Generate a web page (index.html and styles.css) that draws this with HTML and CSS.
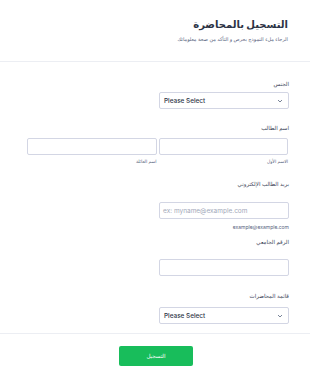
FILE: index.html
```html
<!DOCTYPE html>
<html lang="ar" dir="rtl">
<head>
  <meta charset="UTF-8" />
  <meta name="viewport" content="width=device-width, initial-scale=1.0" />
  <title>التسجيل بالمحاضرة</title>
  <link rel="stylesheet" href="styles.css">
</head>

<body>
  <div class="form-header">
    <h1>التسجيل بالمحاضرة</h1>
    <p>الرجاء ملء النموذج بحرص و التأكد من صحة معلوماتك</p>
  </div>

  <form class="form-body">
    <div class="field field-gender">
      <label>الجنس</label>
      <div class="select-box">
        <span>Please Select</span>
        <svg width="6" height="4" viewBox="0 0 6 4"><path d="M1 1l2 2 2-2" fill="none" stroke="#57647e" stroke-width="0.8"/></svg>
      </div>
    </div>

    <div class="field field-name">
      <label>اسم الطالب</label>
      <div class="name-row">
        <div class="name-col">
          <div class="text-box"></div>
          <span class="sub">الاسم الأول</span>
        </div>
        <div class="name-col">
          <div class="text-box"></div>
          <span class="sub">اسم العائلة</span>
        </div>
      </div>
    </div>

    <div class="field field-email">
      <label>بريد الطالب الإلكتروني</label>
      <div class="text-box half placeholder">ex: myname@example.com</div>
      <span class="sub">example@example.com</span>
    </div>

    <div class="field field-number">
      <label>الرقم الجامعي</label>
      <div class="text-box half"></div>
    </div>

    <div class="field field-lectures">
      <label>قائمة المحاضرات</label>
      <div class="select-box">
        <span>Please Select</span>
        <svg width="6" height="4" viewBox="0 0 6 4"><path d="M1 1l2 2 2-2" fill="none" stroke="#57647e" stroke-width="0.8"/></svg>
      </div>
    </div>
  </form>

  <div class="form-footer">
    <button class="submit-btn" type="button">التسجيل</button>
  </div>
</body>
</html>
```

FILE: styles.css
```css
* {
  box-sizing: border-box;
}

body {
  margin: 0;
  width: 310px;
  height: 380px;
  background: #fff;
  font-family: Inter, "Noto Sans", "DejaVu Sans", sans-serif;
  color: #2c3345;
  overflow: hidden;
}

.form-header {
  padding: 16px 22px 0 0;
  height: 62px;
  border-bottom: 1px solid #eceef3;
}

.form-header h1 {
  margin: 0;
  font-size: 10px;
  line-height: 17px;
  font-weight: 700;
  color: #2c3345;
}

.form-header p {
  margin: 2px 0 0;
  font-size: 5px;
  line-height: 8px;
  color: #57647e;
}

.form-body {
  padding: 0 21px 0 27px;
  display: flex;
  flex-direction: column;
  align-items: flex-start;
}

.field {
  display: flex;
  flex-direction: column;
  align-items: flex-start;
  width: 100%;
}

.field label {
  display: block;
  font-size: 5.5px;
  line-height: 10px;
  color: #3d4559;
}

.field-gender { margin-top: 17px; }
.field-gender label { margin-bottom: 3px; }

.field-name { margin-top: 14px; }
.field-name label { margin-bottom: 5px; }

.field-email { margin-top: 13px; }
.field-email label { margin-bottom: 13px; }

.field-number { margin-top: 6px; }
.field-number label { margin-bottom: 12px; }

.field-lectures { margin-top: 15px; }
.field-lectures label { margin-bottom: 6px; }

.select-box {
  width: 130px;
  height: 17px;
  border: 1px solid #d3d6e4;
  border-radius: 2px;
  display: flex;
  align-items: center;
  justify-content: space-between;
  direction: ltr;
  padding: 0 5px 0 4px;
  font-size: 6.4px;
  font-weight: 500;
  color: #2c3345;
}

.select-box svg {
  display: block;
}

.text-box {
  height: 17px;
  border: 1px solid #d3d6e4;
  border-radius: 2px;
}

.text-box.half {
  width: 130px;
}

.text-box.placeholder {
  direction: ltr;
  display: flex;
  align-items: center;
  padding-left: 3px;
  font-size: 6.5px;
  color: #a2a8b9;
}

.name-row {
  display: flex;
  gap: 2px;
  width: 100%;
  padding-left: 0;
  padding-right: 1px;
}

.name-col {
  flex: 1;
  display: flex;
  flex-direction: column;
}

.name-col .text-box {
  width: 100%;
  height: 17px;
}

.sub {
  display: block;
  font-size: 4.5px;
  line-height: 8px;
  margin-top: 3px;
  color: #57647e;
}

.field-email .sub {
  margin-top: 4px;
  font-size: 5px;
}

.form-footer {
  margin-top: 9px;
  border-top: 1px solid #eceef3;
  padding-top: 12px;
  display: flex;
  justify-content: center;
  padding-left: 2px;
}

.submit-btn {
  width: 74px;
  height: 20px;
  border: none;
  border-radius: 2px;
  background: #18bd5b;
  color: #fff;
  font-family: inherit;
  font-size: 5.5px;
  cursor: pointer;
}
```
